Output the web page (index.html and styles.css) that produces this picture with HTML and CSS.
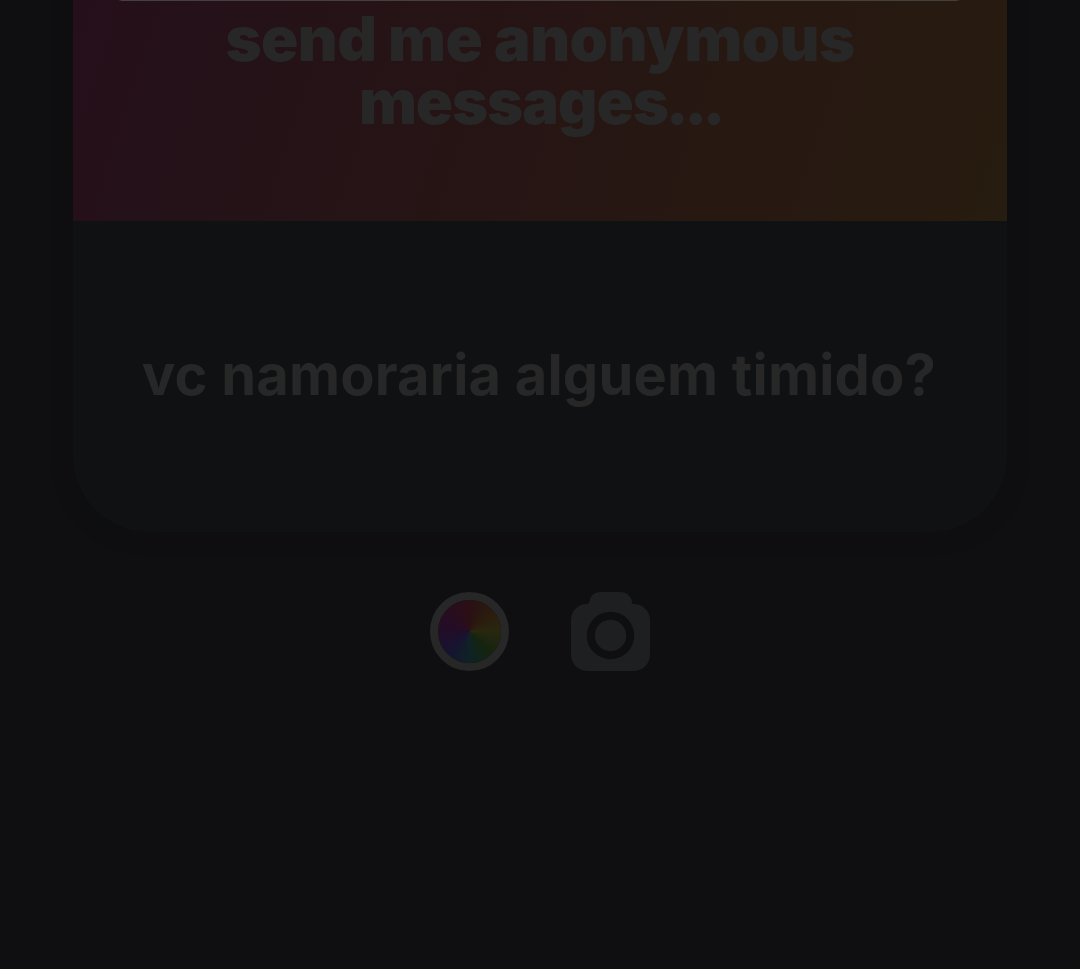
FILE: index.html
```html
<!DOCTYPE html>
<html lang="pt">
<head>
<meta charset="utf-8">
<title>Anonymous messages</title>
<link rel="stylesheet" href="styles.css">
</head>
<body>
<main class="story">
  <section class="card">
    <header class="card-header">
      <h1 class="prompt">send me anonymous<br><span class="prompt-second">messages<span class="dots">...</span></span></h1>
    </header>
    <p class="message"><span class="message-text">vc namoraria alguem timido?</span></p>
  </section>
  <nav class="tools">
    <button class="tool color-wheel" aria-label="Color"></button>
    <button class="tool" aria-label="Camera">
      <svg class="camera" viewBox="0 0 79 79" width="79" height="79">
        <path fill="#1d1f21" d="M16 12C18 12 18 11 18.5 9C20 3 24 0 30 0H49C56 0 60 4 61 10C61 12 61 12 63 12C72 12 79 19 79 28V62C79 72 72 79 62 79H17C7 79 0 72 0 62V28C0 19 7 12 16 12Z"/>
        <circle cx="39.5" cy="43.5" r="19.7" fill="#1d1f21" stroke="#0f0f11" stroke-width="8"/>
      </svg>
    </button>
  </nav>
</main>
</body>
</html>
```
FILE: styles.css
```css
body {
  margin: 0;
  background: #0f0f11;
  font-family: Inter, "Liberation Sans", sans-serif;
}
.story {
  height: 969px;
  display: flex;
  flex-direction: column;
  align-items: center;
  overflow: hidden;
}
.card {
  width: 934px;
  height: 532px;
  flex: none;
  display: flex;
  flex-direction: column;
  border-radius: 0 0 76px 76px;
  overflow: hidden;
  background: #101113;
  box-shadow: 0 0 20px #0f0f0f;
}
.card-header {
  box-sizing: border-box;
  height: 221px;
  padding-top: 7px;
  text-align: center;
  background:
    linear-gradient(90deg, transparent, #454040 4px, #45403a 838px, transparent) 45px 0 / 842px 1px no-repeat,
    linear-gradient(108deg, #250f1b 0%, #251218 20%, #261415 42%, #271812 68%, #271c10 100%);
}
.prompt {
  margin: 0;
  font-size: 61.5px;
  line-height: 63px;
  font-weight: 900;
  letter-spacing: -0.55px;
  color: #272727;
  white-space: nowrap;
}
.prompt-second {
  letter-spacing: -1.1px;
}
.dots {
  letter-spacing: -4.5px;
  margin-left: -2px;
}
.message {
  flex: 1;
  margin: 0;
  padding: 0 2px 3px 0;
  display: flex;
  align-items: center;
  justify-content: center;
  font-size: 56px;
  font-weight: 700;
  color: #272727;
  white-space: nowrap;
}
.message-text {
  letter-spacing: 0.2px;
}
.tools {
  display: flex;
  gap: 62px;
  margin-top: 60px;
}
.tool {
  width: 79px;
  height: 79px;
  padding: 0;
  border: 0;
  background: none;
}
.camera {
  display: block;
}
.color-wheel {
  box-sizing: border-box;
  border: 8px solid #272727;
  border-radius: 50%;
  background: conic-gradient(#2a1013, #2b1b0f 45deg, #29270f 90deg, #14240f 135deg, #0f2225 180deg, #171331 225deg, #220d28 270deg, #280d20 315deg, #2a1013) padding-box;
}
```
